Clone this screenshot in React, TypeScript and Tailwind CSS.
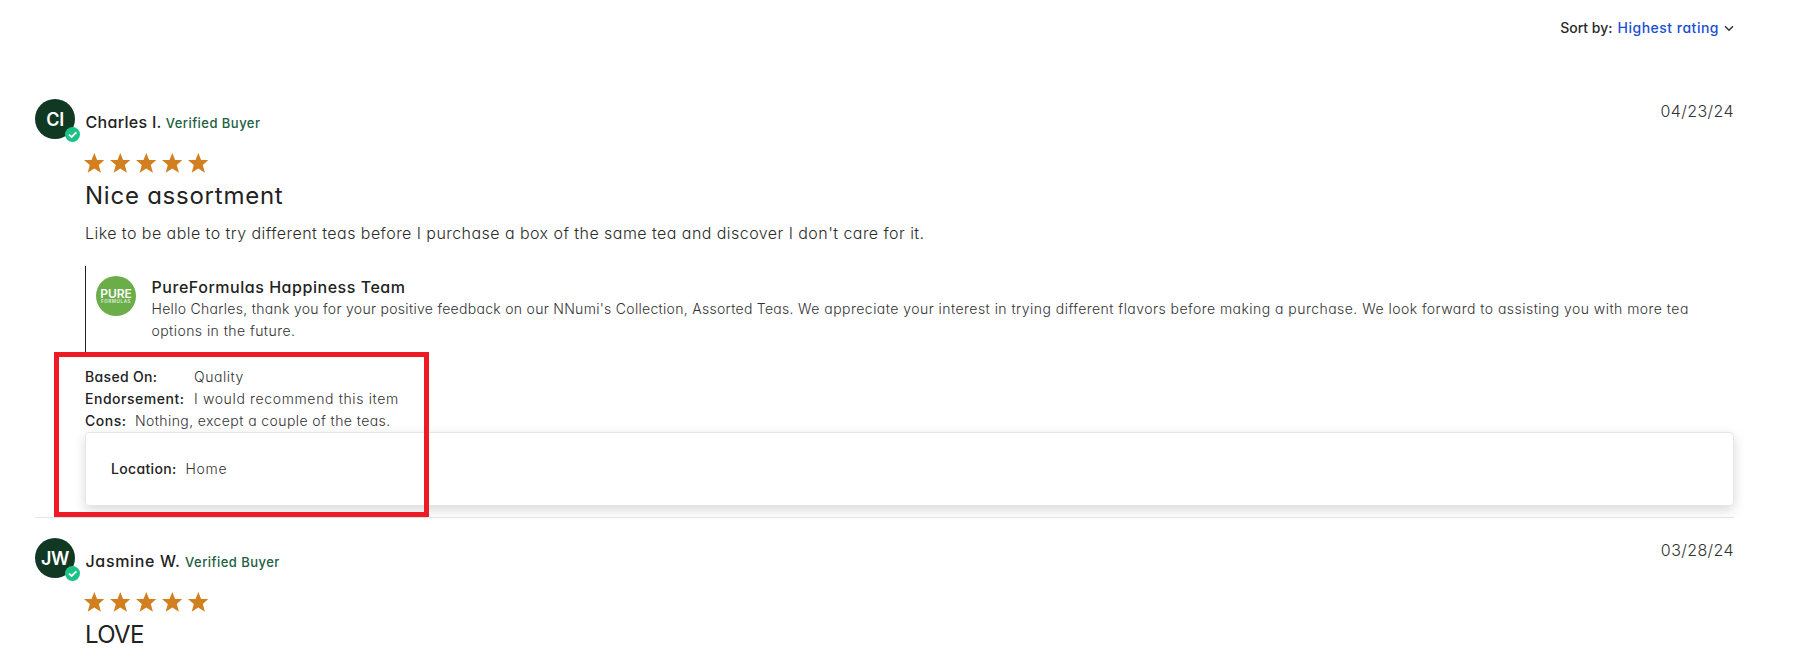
import React from "react";

function VerifiedBadge() {
  return (
    <svg className="absolute left-[30px] top-[28px] h-[15px] w-[15px]" viewBox="0 0 15 15" aria-hidden="true">
      <circle cx="7.5" cy="7.5" r="7.5" fill="#1cc286" />
      <path d="M4 7.6 6.6 10 11.4 5.3" fill="none" stroke="#fff" strokeWidth="1.8" />
    </svg>
  );
}

function Stars() {
  return (
    <div className="ml-[49px] mt-[11px] flex h-5 gap-[6px]">
      {[0, 1, 2, 3, 4].map((i) => (
        <svg key={i} className="h-5 w-5" viewBox="0 0 20 20" aria-hidden="true">
          <path
            d="M10.3 0 13.1 7H20.4L14.8 11.9 16.9 19.8 10.3 15.5 3.7 19.8 5.8 11.9 0 7H7.5Z"
            fill="#d17f1f"
          />
        </svg>
      ))}
    </div>
  );
}

interface HeaderProps {
  initials: string;
  name: string;
  nameClass: string;
  date: string;
}

function ReviewHeader({ initials, name, nameClass, date }: HeaderProps) {
  return (
    <div className="flex h-[43px] items-start">
      <div className="relative flex h-10 w-10 shrink-0 items-center justify-center rounded-full bg-[#103822] text-[18px] font-semibold tracking-[-0.3px] text-white">
        {initials}
        <VerifiedBadge />
      </div>
      <div className="ml-[10.5px] mt-[11px] flex items-baseline whitespace-nowrap leading-6">
        <span className={nameClass}>{name}</span>
        <span className="text-[13px] font-medium tracking-[0.46px] text-[#21603f]">Verified Buyer</span>
      </div>
      <span className="ml-auto text-[16px] font-light leading-6 tracking-[0.4px] text-[#333]">{date}</span>
    </div>
  );
}

function BrandLogo() {
  return (
    <div className="flex h-10 w-10 shrink-0 flex-col items-center justify-center rounded-full bg-[#6bad49] text-white">
      <span className="text-[12px] font-semibold leading-[11px] tracking-[-0.1px]">PURE</span>
      <span className="whitespace-nowrap text-[4.5px] font-semibold leading-[5px] tracking-[0.6px] text-white/80">FORMULAS</span>
    </div>
  );
}

export default function App() {
  return (
    <div className="relative h-[663px] w-[1815px] overflow-hidden bg-white pl-[35px] pr-[81px] font-[Inter,sans-serif] text-[#222] [font-feature-settings:'cv11']">
      <div className="flex h-[99px] items-start justify-end pt-[17px] text-[14px] font-medium leading-[22px]">
        <span className="mr-[5px] text-[#2a2a2a]">Sort by:</span>
        <span className="mr-[5px] tracking-[0.5px] text-[#1a4fd0]">Highest rating</span>
        <svg className="mt-[8px] h-[7px] w-[10px]" viewBox="0 0 10 7" aria-hidden="true">
          <path d="M1 1.2 5 5.2 9 1.2" fill="none" stroke="#333" strokeWidth="1.5" />
        </svg>
      </div>

      <article className="h-[419px] border-b border-[#e4e5e6]">
        <ReviewHeader
          initials="CI"
          name="Charles I."
          nameClass="mr-[4px] text-[16px] font-medium tracking-[0.3px]"
          date="04/23/24"
        />
        <Stars />
        <div className="ml-[50px]">
          <h3 className="mt-[5px] text-[24px] font-normal leading-9 tracking-[0.76px]">Nice assortment</h3>
          <p className="mt-[7px] whitespace-nowrap text-[16px] font-light leading-6 tracking-[0.448px] text-[#2b2b2b]">
            Like to be able to try different teas before I purchase a box of the same tea and discover I don't care for it.
          </p>

          <div className="mt-[21px] flex h-[87px] border-l border-[#222] pl-[10px] pt-[10px]">
            <BrandLogo />
            <div className="ml-[15.5px]">
              <div className="text-[16px] font-medium leading-[22px] tracking-[0.535px]">PureFormulas Happiness Team</div>
              <p className="text-[14px] font-light leading-[22px] text-[#333]">
                <span className="block whitespace-nowrap tracking-[0.46px]">
                  <span className="tracking-[0.295px]">
                    Hello Charles, thank you for your positive feedback on our NNumi's Collection, Assorted Teas.{" "}
                  </span>
                  We appreciate your interest in trying different flavors before making a purchase. We look forward to assisting you with more tea
                </span>
                <span className="block tracking-[0.44px]">options in the future.</span>
              </p>
            </div>
          </div>

          <dl className="mt-[13px] text-[14px] leading-[22px]">
            <div className="flex">
              <dt className="w-[109px] font-medium tracking-[0.34px]">Based On:</dt>
              <dd className="font-light tracking-[0.55px] text-[#333]">Quality</dd>
            </div>
            <div className="flex">
              <dt className="w-[109px] font-medium tracking-[0.52px]">Endorsement:</dt>
              <dd className="font-light tracking-[0.64px] text-[#333]">I would recommend this item</dd>
            </div>
            <div className="flex">
              <dt className="w-[50px] font-medium tracking-[0.5px]">Cons:</dt>
              <dd className="font-light tracking-[0.41px] text-[#333]">Nothing, except a couple of the teas.</dd>
            </div>
          </dl>

          <dl className="flex h-[74px] items-start rounded-[4px] border border-[#e6e6e6] pl-[25px] pt-[25px] text-[14px] leading-[22px] shadow-[0_4px_12px_rgba(0,0,0,0.15)]">
            <dt className="w-[74.5px] font-medium tracking-[0.33px]">Location:</dt>
            <dd className="font-light tracking-[0.7px] text-[#333]">Home</dd>
          </dl>
        </div>
      </article>

      <article className="pt-[20px]">
        <ReviewHeader
          initials="JW"
          name="Jasmine W."
          nameClass="mr-[4.5px] text-[16px] font-medium tracking-[0.65px]"
          date="03/28/24"
        />
        <Stars />
        <h3 className="ml-[50px] mt-[5px] text-[24px] font-normal leading-9 tracking-[-0.7px]">LOVE</h3>
      </article>

      <div className="pointer-events-none absolute left-[54px] top-[352px] h-[165px] w-[375px] border-[5px] border-[#ee1b24]" />
    </div>
  );
}
